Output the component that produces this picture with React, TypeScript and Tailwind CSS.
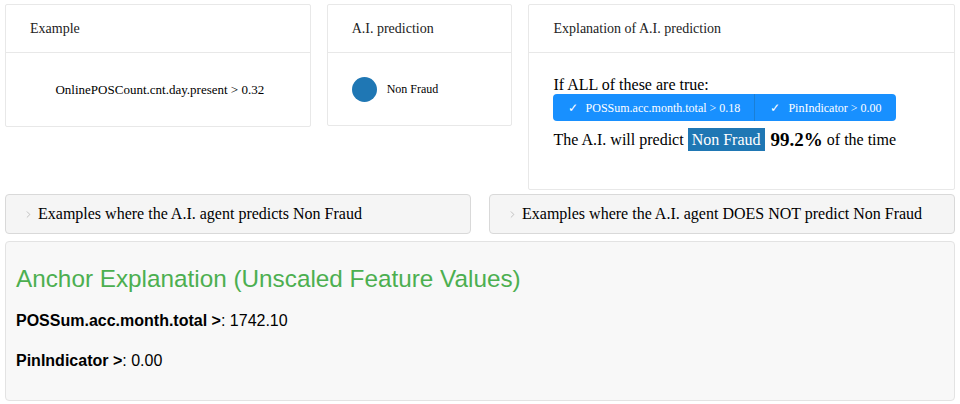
import { ChevronRight } from 'lucide-react';

const serif = { fontFamily: '"Liberation Serif", "Times New Roman", serif' };

const Card = ({ title, className, children }: { title: string; className: string; children: React.ReactNode }) => (
  <div className={`bg-white border border-[#e8e8e8] rounded-[2px] ${className}`}>
    <div className="h-[48px] flex items-center px-[24px] border-b border-[#e8e8e8] text-[14px] text-[#222]">
      {title}
    </div>
    {children}
  </div>
);

export default function App() {
  return (
    <div className="w-[960px] h-[404px] bg-white px-[5px] pt-[4px]" style={serif}>
      <div className="flex items-start">
        <Card title="Example" className="w-[306px] h-[123px]">
          <div className="h-[73px] flex items-center justify-center text-[13px] text-black pl-[4px]">
            OnlinePOSCount.cnt.day.present &gt; 0.32
          </div>
        </Card>
        <Card title="A.I. prediction" className="w-[186px] h-[122px] ml-[16px]">
          <div className="h-[72px] flex items-center px-[24px] text-[12px] text-black">
            <span className="w-[25px] h-[25px] rounded-full bg-[#1f77b4] mr-[10px]" />
            Non Fraud
          </div>
        </Card>
        <Card title="Explanation of A.I. prediction" className="w-[427px] h-[186px] ml-[16px]">
          <div className="px-[24px] pt-[22px] text-[16px] text-black">
            <div className="leading-[19px]">If ALL of these are true:</div>
            <div className="flex w-[343px] h-[27px] bg-[#1890ff] rounded-[4px] text-white text-[12px]">
              <div className="w-[202px] flex items-center justify-center border-r border-[#1a7fd6]">
                <span className="mr-[8px]">✓</span>POSSum.acc.month.total &gt; 0.18
              </div>
              <div className="flex-1 flex items-center justify-center">
                <span className="mr-[8px]">✓</span>PinIndicator &gt; 0.00
              </div>
            </div>
            <div className="flex items-center h-[23px] mt-[7px] leading-[23px]">
              The A.I. will predict
              <span className="ml-[4px] mr-[6px] bg-[#1f77b4] text-white px-[4px] h-[23px] flex items-center">Non Fraud</span>
              <span className="text-[19px] font-bold mr-[4px]">99.2%</span>
              of the time
            </div>
          </div>
        </Card>
      </div>
      <div className="flex justify-between mt-[4px]">
        {['Examples where the A.I. agent predicts Non Fraud', 'Examples where the A.I. agent DOES NOT predict Non Fraud'].map((t) => (
          <div key={t} className="w-[466px] h-[40px] bg-[#f5f5f5] border border-[#d9d9d9] rounded-[4px] flex items-center pl-[17px] text-[16px] text-black">
            <ChevronRight className="w-[11px] h-[11px] text-[#aaa] mr-[4px]" strokeWidth={1.5} />
            {t}
          </div>
        ))}
      </div>
      <div
        className="mt-[7px] h-[160px] bg-[#f8f8f8] border border-[#e3e3e3] rounded-[4px] px-[10px] pt-[21px] text-black"
        style={{ fontFamily: '"Liberation Sans", Arial, sans-serif' }}
      >
        <div className="text-[24.3px] text-[#4caf50] leading-[32px]">Anchor Explanation (Unscaled Feature Values)</div>
        <div className="mt-[16px] text-[16px] leading-[20px]">
          <b>POSSum.acc.month.total &gt;</b>: 1742.10
        </div>
        <div className="mt-[20px] text-[16px] leading-[20px]">
          <b>PinIndicator &gt;</b>: 0.00
        </div>
      </div>
    </div>
  );
}
